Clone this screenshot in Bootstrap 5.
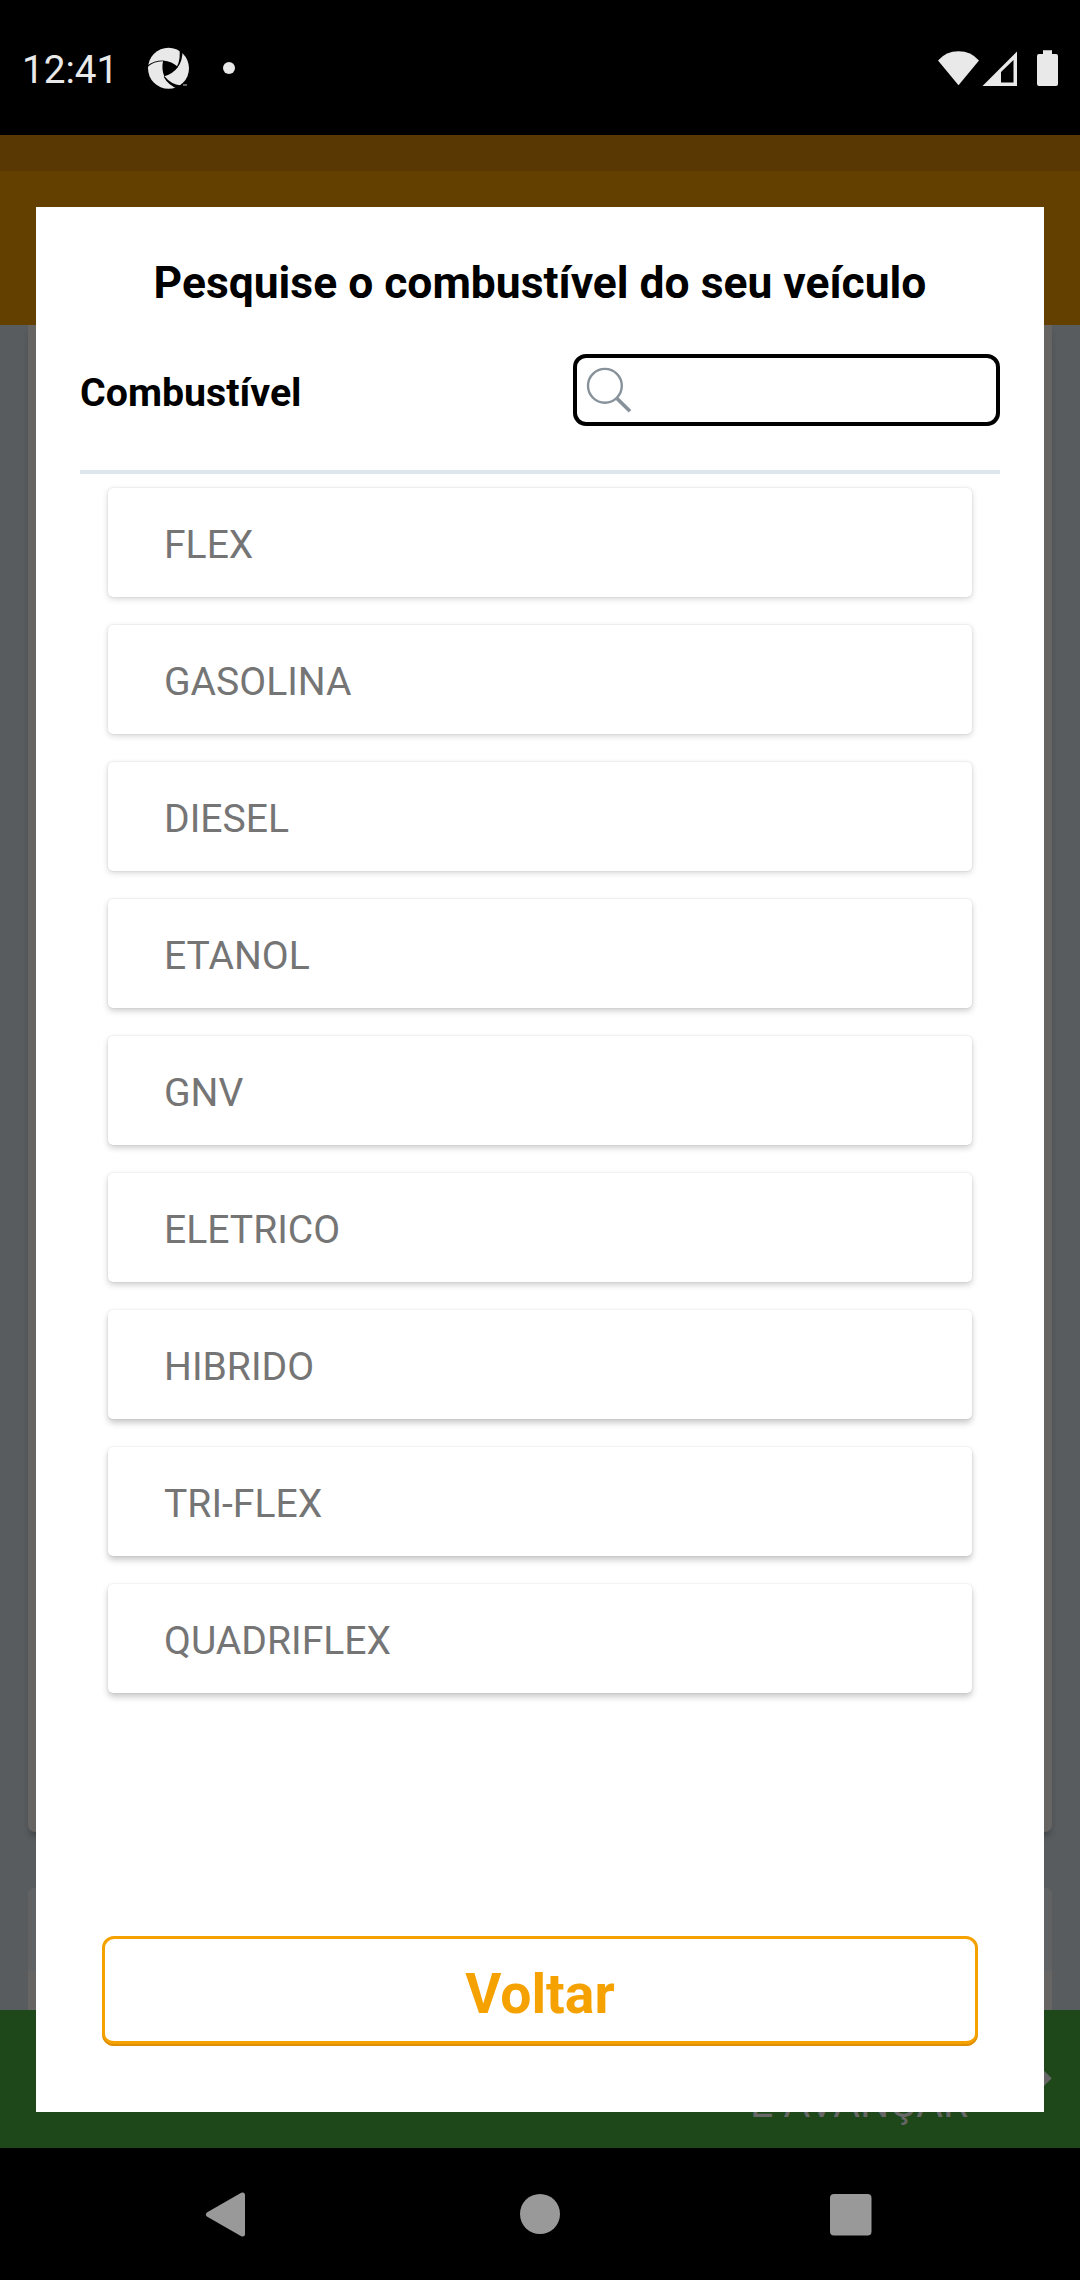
<!DOCTYPE html>
<html lang="pt-BR">
<head>
<meta charset="utf-8">
<meta name="viewport" content="width=device-width, initial-scale=1">
<title>Combustível</title>
<link rel="stylesheet" href="https://cdn.jsdelivr.net/npm/bootstrap@5.3.0/dist/css/bootstrap.min.css">
<style>
body{font-family:Roboto,"Liberation Sans",sans-serif;background:#000;width:1080px;height:2280px;overflow:hidden}
.screen{width:1080px;height:2280px}
.statusbar{height:135px;padding:0 22px 0 22px;color:#e9e9e9}
.clock{font-size:38.7px;line-height:47px;width:125px;padding-top:3px}
.app{height:2013px;background:#585c5e}
.strip{height:36px;background:#593804}
.appbar{height:154px;background:#633f00}
.page-body{height:1685px;padding:0 28px}
.panel-a{height:1507px;background:#666564;border-radius:0 0 7px 7px;box-shadow:0 6px 6px -2px rgba(0,0,0,.28)}
.panel-b{margin-top:56px;height:122px;background:#666564;border-radius:7px 7px 0 0}
.panel-head{height:83px;background:#616263}
.advance{height:138px;background:#1e481a;color:#666;font-size:41.1px;line-height:47px}
.advance-text{padding:70px 0 0 750px}
.dialog-box{left:36px;top:72px;width:1008px;height:1905px;background:#fff;padding:50px 44px 66px}
.dialog-title{font-size:44.4px;line-height:52px;color:#000}
.search-row{margin-top:45px;height:72px}
.search-label{font-size:39.3px;line-height:48px;padding-top:6px;color:#000}
.search-box{width:427px;height:72px;border:4px solid #000;border-radius:13px}
.divider{height:4px;margin-top:44px;background:#dfe6eb}
.fuel-list{padding:14px 28px 0;gap:28px}
.fuel{height:109px;border-radius:5px;border:0;padding:6px 0 0 56px;font-size:39.1px;line-height:47px;color:#757575;box-shadow:0 2px 6px rgba(0,0,0,.16),0 0 2px rgba(0,0,0,.12)}
.fuel:nth-child(n+4){box-shadow:0 3px 6px rgba(0,0,0,.19),0 0 2px rgba(0,0,0,.12)}
.fuel:nth-child(n+7){box-shadow:0 4px 6px rgba(0,0,0,.21),0 0 2px rgba(0,0,0,.12)}
.btn-back{margin:0 22px;height:110px;border:3px solid #f5a100;border-bottom-width:5px;border-radius:12px;color:#f5a100;font-size:55.3px;line-height:64px;padding:10px 0 0;position:relative}
.btn-back::after{content:"";position:absolute;inset:-3px -3px -5px;border-radius:12px;box-shadow:inset 0 -2px 0 #df8f06}
.navkeys{height:132px}
</style>
</head>
<body>
<div class="screen d-flex flex-column">
  <header class="statusbar d-flex">
    <div class="d-flex align-items-center flex-grow-1">
      <span class="clock">12:41</span>
      <svg width="92" height="46" viewBox="147 44 92 46">
        <circle cx="168.500" cy="67.300" r="20.500" fill="#e9e9e9"/>
        <g fill="#000">
          <path d="M147 64.800Q154 59.300 163 59.400Q172 60.200 178 66Q173 72.800 164.300 75.300Q161.300 68 163 60.300Q154 60 147 66.300z"/>
          <path d="M180.200 47L182.500 49Q182.800 60 177.500 66.500L176.800 65.800Q181 58 179.300 47z"/>
          <path d="M164.300 75Q171 83.500 181 84.500L187 84V88H178Q168 84 163.800 76z"/>
        </g>
        <path d="M183 84h4" stroke="#8a8a8a" stroke-width="1.500"/>
        <circle cx="229" cy="67" r="6" fill="#e9e9e9"/>
      </svg>
    </div>
    <svg class="align-self-center" width="122" height="46" viewBox="936 44 122 46" fill="#e9e9e9">
      <path d="M938 59.500Q946 50.300 958.500 50.300T979 59.500L958.500 84.300z"/>
      <path fill-rule="evenodd" d="M982.500 85L1017 50.500V85zM1001 71v10.500h12.500V59z"/>
      <path d="M1043 49.300h9v3.700h4a2 2 0 0 1 2 2v28a2 2 0 0 1-2 2h-17a2 2 0 0 1-2-2v-28a2 2 0 0 1 2-2h4z"/>
    </svg>
  </header>
  <main class="app position-relative">
    <div class="strip"></div>
    <div class="appbar"></div>
    <div class="page-body">
      <div class="panel-a"></div>
      <div class="panel-b overflow-hidden"><div class="panel-head"></div></div>
    </div>
    <div class="advance d-flex align-items-start">
      <div class="advance-text text-nowrap">E AVANÇAR</div>
      <svg class="ms-auto me-4" width="24" height="88" viewBox="1032 2010 24 88"><path d="M1032 2058.500L1051.700 2078.300L1032 2098z" fill="#666"/></svg>
    </div>
    <section class="dialog-box position-absolute d-flex flex-column" role="dialog">
      <h1 class="dialog-title fw-bold text-center m-0">Pesquise o combustível do seu veículo</h1>
      <div class="search-row d-flex justify-content-between align-items-center">
        <label class="search-label fw-bold">Combustível</label>
        <div class="search-box d-flex">
          <svg width="60" height="64" viewBox="577 358 60 64" fill="none" stroke="#87919a"><circle cx="604.900" cy="385.800" r="16.900" stroke-width="2.400"/><path d="M617 398.500L630 411.200" stroke-width="3.700"/></svg>
        </div>
      </div>
      <div class="divider"></div>
      <div class="fuel-list d-flex flex-column">
        <div class="fuel card justify-content-center">FLEX</div>
        <div class="fuel card justify-content-center">GASOLINA</div>
        <div class="fuel card justify-content-center">DIESEL</div>
        <div class="fuel card justify-content-center">ETANOL</div>
        <div class="fuel card justify-content-center">GNV</div>
        <div class="fuel card justify-content-center">ELETRICO</div>
        <div class="fuel card justify-content-center">HIBRIDO</div>
        <div class="fuel card justify-content-center">TRI-FLEX</div>
        <div class="fuel card justify-content-center">QUADRIFLEX</div>
      </div>
      <button type="button" class="btn btn-back fw-bold mt-auto">Voltar</button>
    </section>
  </main>
  <footer class="navkeys">
    <svg width="1080" height="132" viewBox="0 2148 1080 132" fill="#999"><path d="M208.500 2214.500L242.500 2195V2234z" stroke="#999" stroke-width="5" stroke-linejoin="round"/><circle cx="540" cy="2214" r="20"/><rect x="830" y="2194" width="41.500" height="41.500" rx="4"/></svg>
  </footer>
</div>
<script src="https://cdn.jsdelivr.net/npm/bootstrap@5.3.0/dist/js/bootstrap.bundle.min.js"></script>
</body>
</html>
